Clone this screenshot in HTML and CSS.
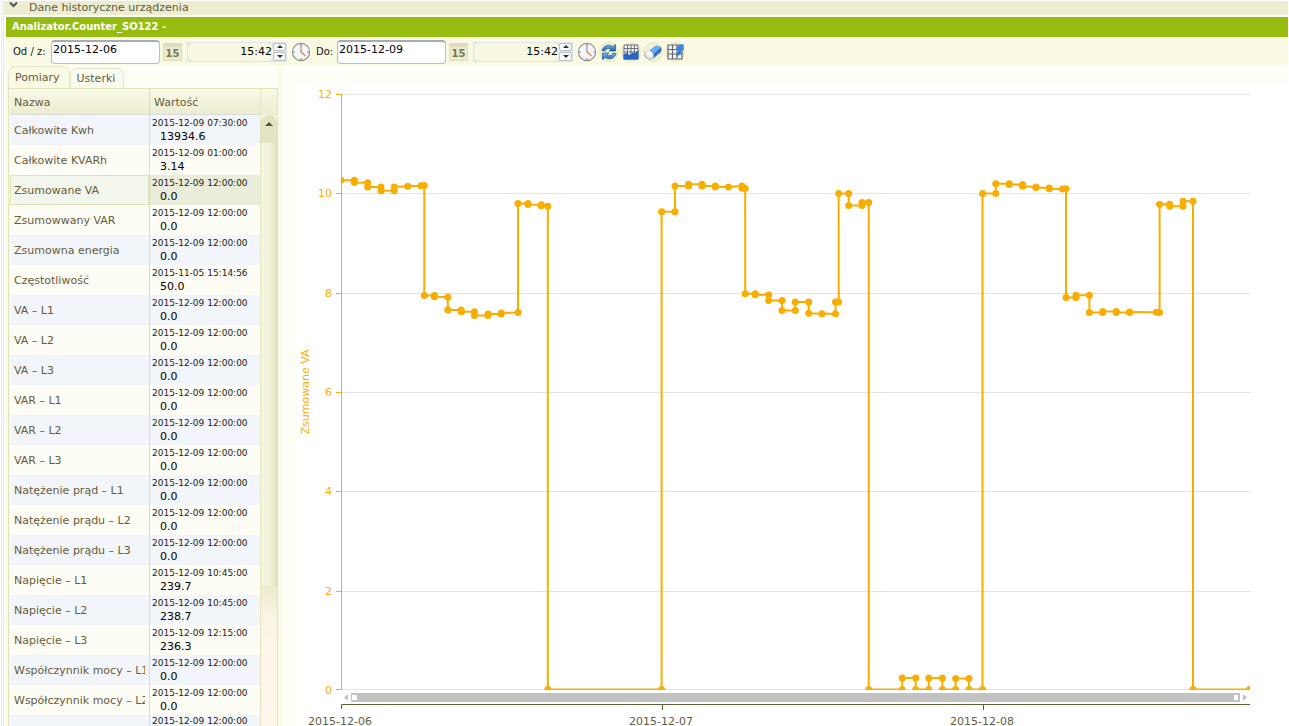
FILE: index.html
```html
<!DOCTYPE html>
<html lang="pl">
<head>
<meta charset="utf-8">
<title>Dane historyczne urządzenia</title>
<link rel="stylesheet" href="styles.css">
</head>
<body>
<svg class="defs" aria-hidden="true">
  <defs>
    <linearGradient id="blue" x1="0" y1="0" x2="0" y2="1"><stop offset="0" stop-color="#7cc0ee"/><stop offset="1" stop-color="#1c5bb0"/></linearGradient>
    <symbol id="clock" viewBox="0 0 20 20">
      <circle cx="10" cy="10" r="8.6" fill="#f7f7f8" stroke="#8b8c88" stroke-width="1.1"/>
      <path d="M10 2v2M10 16v2M2 10h2M16 10h2" stroke="#8d9299" stroke-width="1.2"/>
      <path d="M10 3.500v6.500" fill="none" stroke="#7a8490" stroke-width="1"/>
      <path d="M9.500 9.500l5 4.500" stroke="#d9875f" stroke-width="1.300"/>
    </symbol>
    <symbol id="halo" viewBox="0 0 20 20"><circle cx="10" cy="10" r="9.300" fill="#f1f0d3" stroke="#e5e4bd"/></symbol>
  </defs>
</svg>
<div class="page">
  <div class="section-head">
    <svg class="chevron" viewBox="0 0 9 7"><path d="M1 1.500l3.500 3.500 3.500-3.500" fill="none" stroke="#55553c" stroke-width="2"/></svg>
    <span>Dane historyczne urządzenia</span>
  </div>
  <div class="panel">
    <h1 class="title">Analizator.Counter_SO122 -</h1>
    <form class="toolbar">
      <label class="lbl" for="from">Od / z:</label>
      <input class="date" id="from" type="text" value="2015-12-06">
      <button class="cal" type="button" aria-label="Kalendarz od">15</button>
      <span class="time"><input type="text" value="15:42" aria-label="Godzina od"><span class="spin"><button type="button" aria-label="Więcej"><i class="up"></i></button><button type="button" aria-label="Mniej"><i class="down"></i></button></span></span>
      <button class="icon clock" type="button" aria-label="Teraz"><svg viewBox="0 0 20 20"><use href="#clock"/></svg></button>
      <label class="lbl" for="to">Do:</label>
      <input class="date" id="to" type="text" value="2015-12-09">
      <button class="cal" type="button" aria-label="Kalendarz do">15</button>
      <span class="time"><input type="text" value="15:42" aria-label="Godzina do"><span class="spin"><button type="button" aria-label="Więcej"><i class="up"></i></button><button type="button" aria-label="Mniej"><i class="down"></i></button></span></span>
      <span class="actions">
      <button class="icon" type="button" aria-label="Teraz"><svg viewBox="0 0 20 20"><use href="#clock"/></svg></button>
      <button class="icon" type="button" aria-label="Odśwież"><svg viewBox="0 0 20 20"><use href="#halo"/>
        <path d="M3 8.500C4 4 9.500 1.500 13.500 4.500L16.500 2.500V9H10l2-2C9.500 5.500 6.500 7 6 9z" fill="url(#blue)" stroke="#285b87" stroke-width=".7"/>
        <path d="M17 11.500C16 16 10.500 18.500 6.500 15.500L3.500 17.500V11H10l-2 2C10.500 14.500 13.500 13 14 11z" fill="url(#blue)" stroke="#285b87" stroke-width=".7"/></svg></button>
      <button class="icon" type="button" aria-label="Wykres"><svg viewBox="0 0 20 20"><use href="#halo"/>
        <path d="M3 3h14v14H3z" fill="#f4f5f6"/><path d="M3 3h14v14H3zM6.500 3v14M10 3v14M13.500 3v14M3 6.500h14M3 10h14" fill="none" stroke="#69717a" stroke-width="1"/>
        <path d="M2.500 12.500l3-1.500 3 2 3.500-2.500 2.500.5 3-3V17.500h-15z" fill="#2667c4"/></svg></button>
      <button class="icon" type="button" aria-label="Wyczyść"><svg viewBox="0 0 20 20"><use href="#halo"/>
        <path d="M2 11l5-2.500 4 3v4l-4.500 2-4.500-3z" fill="#e6e8ee" stroke="#929aa4" stroke-width=".8"/>
        <path d="M2 11l5-2.500 4 3-4.500 2.500z" fill="#fbfbfd"/>
        <path d="M7 8.500L13 4l5 1.500v4l-7 6v-4z" fill="#2b6fcc" stroke="#2b63b0" stroke-width=".5"/>
        <path d="M7 8.500L13 4l5 1.500-7 6z" fill="#6fadf2"/></svg></button>
      <button class="icon" type="button" aria-label="Eksportuj"><svg viewBox="0 0 20 20"><use href="#halo"/>
        <path d="M3 3h14v14H3z" fill="#f4f4f2"/>
        <path d="M3 3h14v14H3zM7.500 3v14M12 3v14M3 7.500h14M3 12h14" fill="none" stroke="#63666a" stroke-width="1.200"/>
        <path d="M11.500 12.500C14.500 12 15 10 14.800 7.500" fill="none" stroke="#2f78dc" stroke-width="3"/>
        <path d="M10.500 7.500L13 3.500 18.500 2l.500 6z" fill="#3d88e8"/></svg></button>
      </span>
    </form>
    <div class="content">
      <aside class="side">
        <nav class="tabs"><button class="tab active" type="button">Pomiary</button><button class="tab" type="button">Usterki</button></nav>
        <div class="grid-box">
          <table>
            <thead><tr><th class="c-name">Nazwa</th><th>Wartość</th></tr></thead>
            <tbody>
              <tr><td><div class="name">Całkowite Kwh</div></td><td><time>2015-12-09 07:30:00</time><b>13934.6</b></td></tr>
              <tr><td><div class="name">Całkowite KVARh</div></td><td><time>2015-12-09 01:00:00</time><b>3.14</b></td></tr>
              <tr class="selected"><td><div class="name">Zsumowane VA</div></td><td><time>2015-12-09 12:00:00</time><b>0.0</b></td></tr>
              <tr><td><div class="name">Zsumowwany VAR</div></td><td><time>2015-12-09 12:00:00</time><b>0.0</b></td></tr>
              <tr><td><div class="name">Zsumowna energia</div></td><td><time>2015-12-09 12:00:00</time><b>0.0</b></td></tr>
              <tr><td><div class="name">Częstotliwość</div></td><td><time>2015-11-05 15:14:56</time><b>50.0</b></td></tr>
              <tr><td><div class="name">VA – L1</div></td><td><time>2015-12-09 12:00:00</time><b>0.0</b></td></tr>
              <tr><td><div class="name">VA – L2</div></td><td><time>2015-12-09 12:00:00</time><b>0.0</b></td></tr>
              <tr><td><div class="name">VA – L3</div></td><td><time>2015-12-09 12:00:00</time><b>0.0</b></td></tr>
              <tr><td><div class="name">VAR – L1</div></td><td><time>2015-12-09 12:00:00</time><b>0.0</b></td></tr>
              <tr><td><div class="name">VAR – L2</div></td><td><time>2015-12-09 12:00:00</time><b>0.0</b></td></tr>
              <tr><td><div class="name">VAR – L3</div></td><td><time>2015-12-09 12:00:00</time><b>0.0</b></td></tr>
              <tr><td><div class="name">Natężenie prąd – L1</div></td><td><time>2015-12-09 12:00:00</time><b>0.0</b></td></tr>
              <tr><td><div class="name">Natężenie prądu – L2</div></td><td><time>2015-12-09 12:00:00</time><b>0.0</b></td></tr>
              <tr><td><div class="name">Natężenie prądu – L3</div></td><td><time>2015-12-09 12:00:00</time><b>0.0</b></td></tr>
              <tr><td><div class="name">Napięcie – L1</div></td><td><time>2015-12-09 10:45:00</time><b>239.7</b></td></tr>
              <tr><td><div class="name">Napięcie – L2</div></td><td><time>2015-12-09 10:45:00</time><b>238.7</b></td></tr>
              <tr><td><div class="name">Napięcie – L3</div></td><td><time>2015-12-09 12:15:00</time><b>236.3</b></td></tr>
              <tr><td><div class="name">Współczynnik mocy – L1</div></td><td><time>2015-12-09 12:00:00</time><b>0.0</b></td></tr>
              <tr><td><div class="name">Współczynnik mocy – L2</div></td><td><time>2015-12-09 12:00:00</time><b>0.0</b></td></tr>
              <tr><td></td><td><time>2015-12-09 12:00:00</time></td></tr>
            </tbody>
          </table>
          <div class="scroll">
            <div class="cap"></div>
            <button class="arrow" type="button" aria-label="Przewiń w górę"><i class="up"></i></button>
            <div class="thumb"></div>
            <div class="track"></div>
          </div>
        </div>
      </aside>
      <main class="chart">
        <svg viewBox="297 82 991 644" role="img" aria-label="Zsumowane VA">
          <defs>
            <marker id="dot" markerUnits="userSpaceOnUse" markerWidth="8" markerHeight="8" refX="4" refY="4"><circle cx="4" cy="4" r="3.500" fill="#f7ae00"/></marker>
            <clipPath id="plot"><rect x="341" y="90" width="909" height="600"/></clipPath>
          </defs>
          <path class="gridline" d="M342 94.500H1250M342 193.500H1250M342 293.500H1250M342 392.500H1250M342 491.500H1250M342 591.500H1250M342 689.500H1250"/>
          <path class="y-axis" d="M341.500 94V690M336 94.500h6M336 193.500h6M336 293.500h6M336 392.500h6M336 491.500h6M336 591.500h6M336 689.500h6"/>
          <g class="y-labels">
            <text x="332" y="98">12</text><text x="332" y="197">10</text><text x="332" y="297">8</text><text x="332" y="396">6</text><text x="332" y="495">4</text><text x="332" y="595">2</text><text x="332" y="694">0</text>
          </g>
          <text class="y-title" transform="translate(309 392) rotate(-90)">Zsumowane VA</text>
          <polyline class="series" clip-path="url(#plot)" points="341,180.300 354.300,180.300 354.300,182.500 367.700,182.800 367.700,187 381,187 381,190.700 394.300,190.700 394.300,187 407.700,186.300 421,185.800 424.300,185.500 424.300,295.600 434.500,295.600 434.500,296.700 447.800,296.900 447.800,310 461.200,310 461.200,311.800 474.500,311.800 474.500,315.400 488,315.400 488,314 501.200,314 501.200,313 518,312.600 518,203.500 528,203.500 528,204.500 541.300,204.800 541.300,205.700 547.800,206.200 547.800,689.500 661.600,689.500 661.600,211.700 675,211.700 675,186 688.500,186 688.500,184.300 702,184.300 702,186 715.300,186 715.300,186.900 728.500,186.900 742,186 742,188.300 745.200,188.600 745.200,293.800 755.300,293.800 755.300,294.700 768.700,295 768.700,300.600 782,300.600 782,310.600 795.300,310.600 795.300,302 808.700,302 808.700,313.200 822,313.700 835.500,313.800 835.500,302 838.700,302 838.700,193.600 848.700,193.600 848.700,205.500 862,205.500 862,202.600 868.700,202.500 868.700,689.500 902.200,689.500 902.200,678 915.700,678 915.700,689.500 928.800,689.500 928.800,678 942.400,678 942.400,689.500 955.600,689.500 955.600,678.600 969,678.600 969,689.500 982.500,689.500 982.500,193.600 995.800,193.600 995.800,183.700 1009.200,183.700 1009.200,184.600 1022.600,184.600 1022.600,186.200 1036,186.900 1036,187.600 1049.300,187.900 1049.300,188.700 1062.600,188.900 1066,188.700 1066,297.400 1076,297.400 1076,295.200 1089.400,295.200 1089.400,312.600 1102.700,312.600 1102.700,311.500 1116.200,311.500 1116.200,312.600 1129.600,312.600 1129.600,312 1156.300,312.300 1159.600,312.500 1159.600,204.300 1169.700,204.300 1169.700,206.200 1183,206.200 1183,201.300 1193,201.300 1193,689.500 1249.500,689.500"/>
          <rect x="351" y="693" width="889" height="9" fill="#c2c2c2"/>
          <path d="M352 695h5v5h-5zM1234 695h4v5h-4z" fill="#fff"/>
          <path d="M344 697.500l4-3.500v7zM1247 697.500l-4-3.500v7z" fill="#c2c2c2"/>
          <path class="x-axis" d="M341.500 709v-4.500H1250M662.500 704v6M983.500 704v6"/>
          <g class="x-labels"><text x="340" y="725">2015-12-06</text><text x="661" y="725">2015-12-07</text><text x="982" y="725">2015-12-08</text></g>
        </svg>
      </main>
    </div>
  </div>
</div>
</body>
</html>
```
FILE: styles.css
```css
* { box-sizing: border-box; }
html, body { height: 100%; }
body { margin: 0; overflow: hidden; background: #fff; font: 11px/14px Verdana, "DejaVu Sans", sans-serif; color: #645d3c; }
button, input { font: inherit; color: inherit; margin: 0; padding: 0; }
button { border: 0; background: none; }
.defs { position: absolute; width: 0; height: 0; }

.page { height: 100%; margin: 0 1px; border-left: 1px solid #ececec; padding: 1px 0 0 1px; display: flex; flex-direction: column; }
.section-head { height: 14px; flex: none; background: #ebecd0; display: flex; align-items: center; gap: 11px; padding-left: 6px; line-height: 12px; }
.chevron { width: 9px; height: 7px; align-self: flex-start; }
.panel { flex: 1; min-height: 0; border-left: 1px solid #e4e4e0; padding: 2px 0 0 2px; display: flex; flex-direction: column; }
.title { flex: none; margin: 0; height: 20px; padding-left: 6px; background: #96bc0f; color: #fff; font-size: 10px; line-height: 20px; font-weight: bold; }

.toolbar { flex: none; display: flex; align-items: center; height: 29px; padding: 1px 0 0 7px; background: #fafae4; color: #111; border-bottom: 1px solid #fff; }
.lbl { flex: none; font-size: 10px; width: 38px; white-space: nowrap; }
.lbl[for="to"] { width: 21px; }
.date { width: 109px; height: 24px; padding: 0 0 6px 1px; border: 1px solid #b6bfc6; border-top: 2px solid #a4adb4; border-radius: 4px; background: #fff; color: #000; }
.cal { width: 19px; height: 18px; margin: 0 5px 0 3px; border: 1px solid #dedebe; border-top: 4px solid #dedebf; background: #ebebce; color: #77775b; font-size: 10px; line-height: 14px; font-weight: bold; }
.time { display: flex; width: 100px; height: 20px; background: #dce7ea; padding: 1px; }
.time input { flex: 1; min-width: 0; padding-right: 1px; border: 0; border-radius: 5px; background: #f8f8e2; text-align: right; color: #000; }
.spin { width: 13px; display: flex; flex-direction: column; gap: 1px; }
.spin button { flex: 1; border: 1px solid #bcc1c5; border-radius: 2px; background: #f8f9fb; display: flex; align-items: center; justify-content: center; }
.up, .down { display: block; border: solid transparent; border-width: 0 3px; }
.up { border-bottom: 3px solid #333; }
.down { border-top: 3px solid #333; }
.icon { width: 20px; height: 20px; flex: none; }
.icon svg { display: block; width: 20px; height: 20px; }
.clock { margin: 0 5px 0 4px; }
.actions { display: flex; gap: 2px; margin-left: 4px; }

.content { flex: 1; min-height: 0; display: flex; background: #fdfef6; }
.side { flex: none; width: 276px; padding-left: 2px; background: #fafae8; overflow: hidden; border-right: 4px solid #fafbe8; }
.tabs { display: flex; height: 22px; align-items: flex-end; background: #fdfef6; }
.tab { height: 20px; padding: 0 8px 0 6px; border: 1px solid #e6e7ca; border-bottom: 0; border-radius: 7px 7px 0 0; background: #fbfcf0; color: #645d3c; }
.tab.active { height: 22px; padding-left: 6px; padding-right: 9px; background: #f9f9e4; }
.grid-box { display: flex; border: 1px solid #e1e3b8; border-bottom: 0; padding-left: 1px; }
table { width: 250px; flex: none; border-collapse: separate; border-spacing: 0; table-layout: fixed; }
th { height: 26px; padding: 2px 0 0 4px; text-align: left; font-weight: normal; background: linear-gradient(#fafae8, #ebecd0); border-bottom: 1px solid #d9dcdd; }
.c-name { width: 139px; }
th:last-child { border-left: 1px solid #d8dcbc; }
td { height: 30px; padding: 0; overflow: hidden; white-space: nowrap; }
td:first-child { padding: 2px 4px 0; }
.name { overflow: hidden; }
td:last-child { border-left: 1px solid #dadfb8; padding-left: 2px; }
tbody tr:nth-child(odd) { background: #f2f5fa; }
tbody tr:nth-child(even) { background: #fdfcf5; }
tbody tr.selected { background: #e9edda; }
tbody tr.selected td:first-child { background: #f2f6ec; box-shadow: inset 0 0 0 1px #dfe3b5; }
time { display: block; font-size: 9px; line-height: 13px; color: #222; }
td b { display: block; padding-left: 8px; line-height: 14px; font-weight: normal; color: #000; }
tbody tr:last-child td { vertical-align: top; }
.scroll { flex: 1; display: flex; flex-direction: column; border-left: 1px solid #e3e4c4; background: #f7f7e4; }
.cap { height: 26px; background: linear-gradient(#fafae8, #ebecd0); }
.arrow { height: 28px; padding: 0 0 10px; border-radius: 8px 8px 0 0; background: #e3e4c4; display: flex; align-items: center; justify-content: center; }
.arrow .up { border-width: 0 4px 4px; border-bottom-color: #55553c; }
.thumb { height: 443px; background: linear-gradient(90deg, #f6f6e0, #f1f2d8 60%, #dfe1bd); }
.track { flex: 1; background: linear-gradient(#ecebcc, #f8f4e3 30px, #fdf5e9 60px); }

.chart { flex: 1; min-width: 0; margin: 16px 0 0 15px; background: #fff; }
.chart svg { display: block; width: 100%; height: auto; }
.gridline { stroke: #e3e3e3; fill: none; }
.y-axis { stroke: #f7ae00; fill: none; }
.x-axis { stroke: #645d3c; fill: none; }
.y-labels { fill: #f7ae00; text-anchor: end; font-size: 11px; }
.y-title { fill: #f7ae00; text-anchor: middle; font-size: 11px; }
.x-labels { fill: #645d3c; text-anchor: middle; font-size: 11px; }
.series { fill: none; stroke: #f7ae00; stroke-width: 2; marker-start: url(#dot); marker-mid: url(#dot); marker-end: url(#dot); }
```
